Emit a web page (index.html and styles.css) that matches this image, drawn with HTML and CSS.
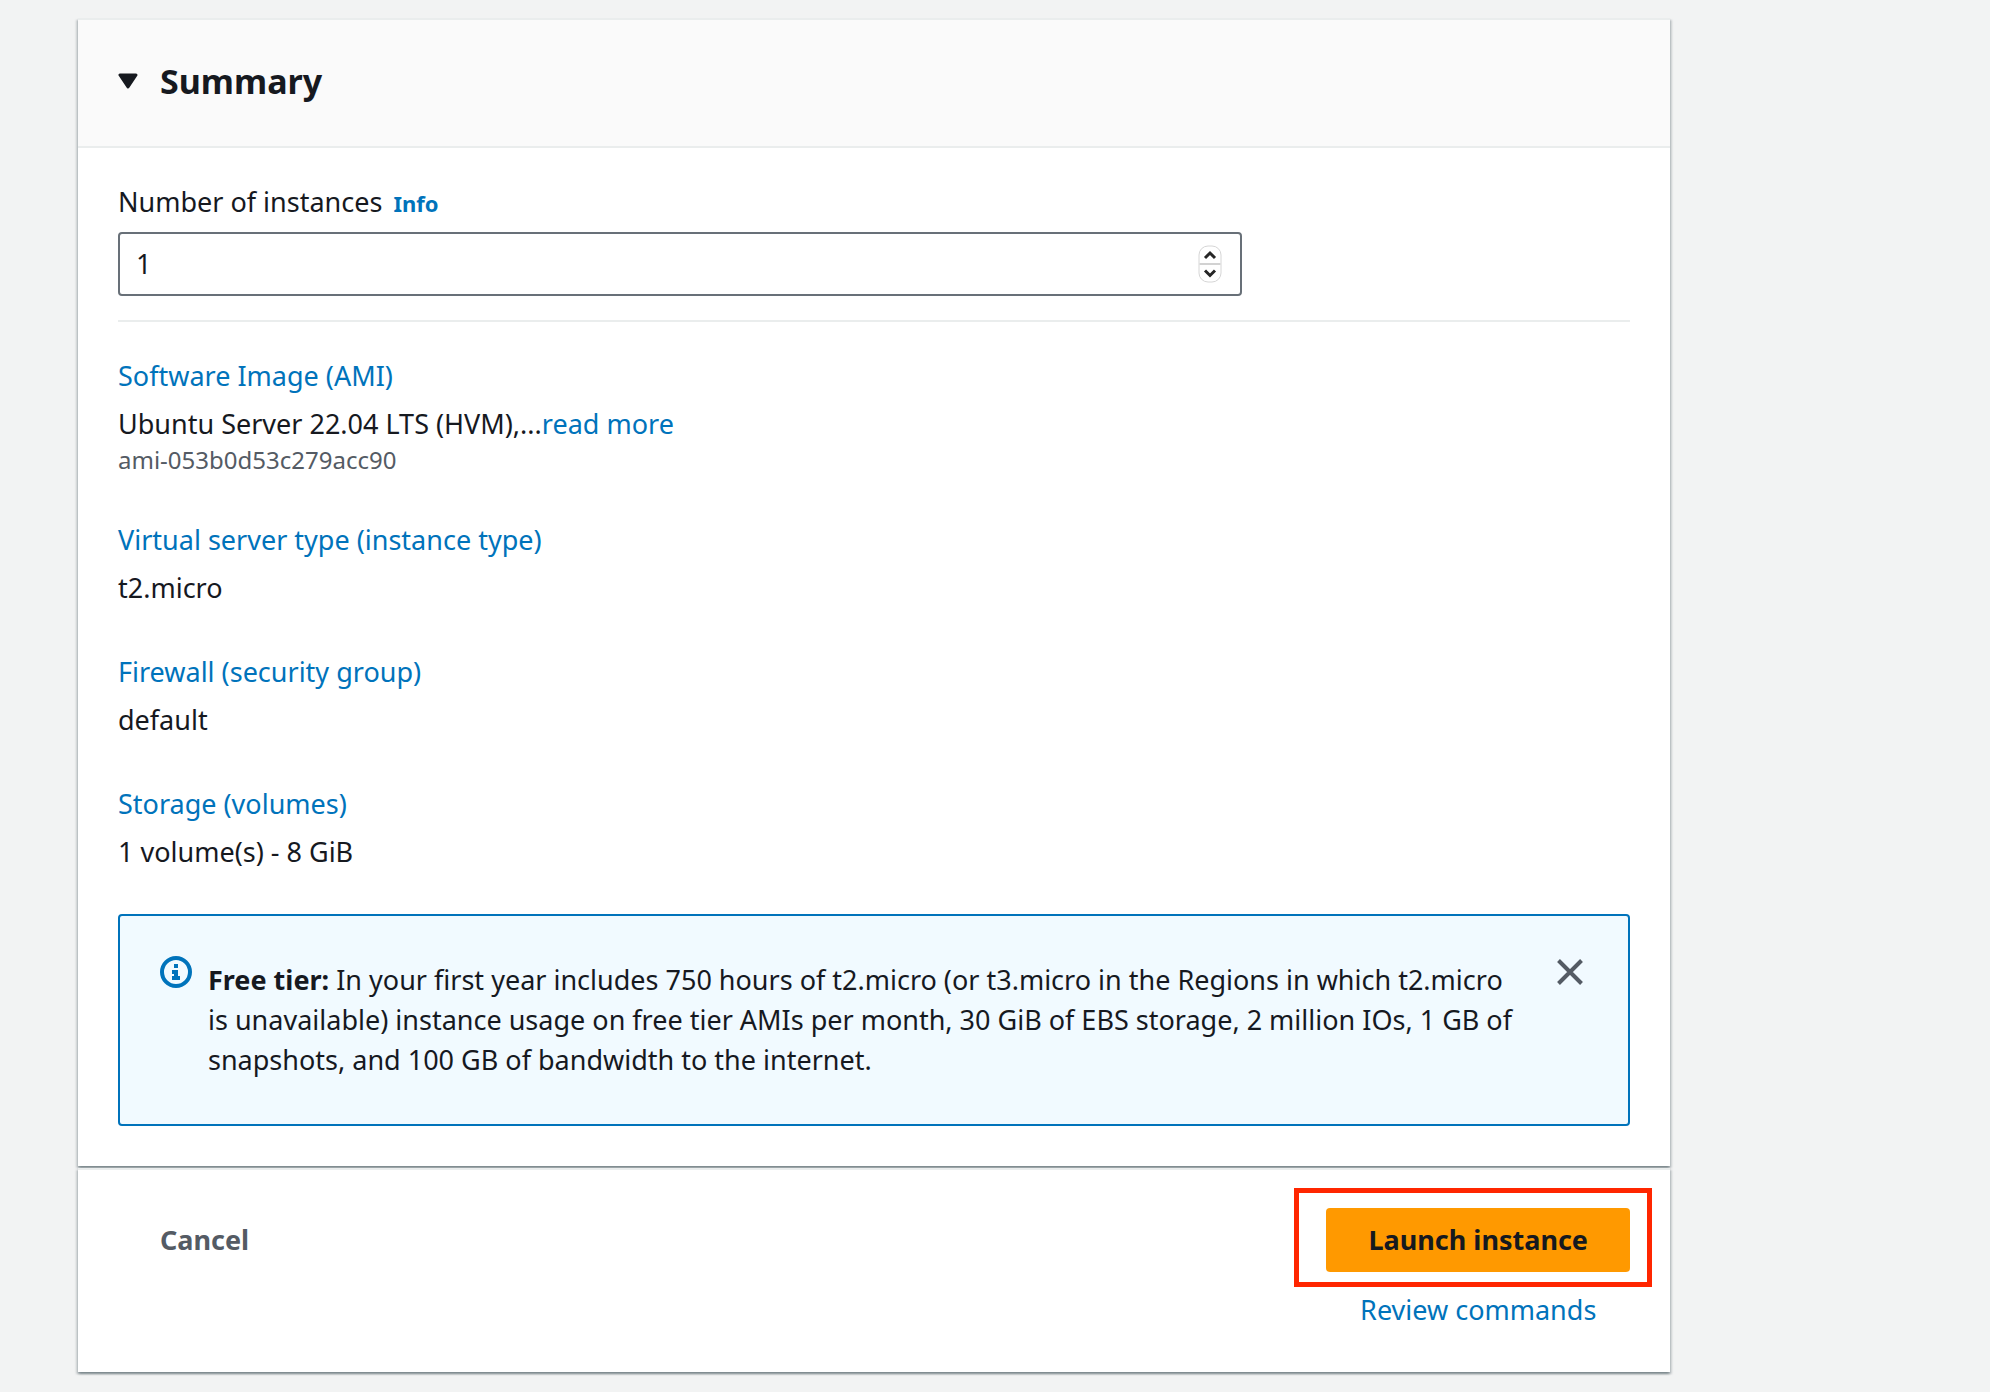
FILE: index.html
```
<!DOCTYPE html>
<html lang="en">
<head>
<meta charset="utf-8">
<meta name="viewport" content="width=device-width, initial-scale=1">
<title>Launch an instance</title>
<link rel="stylesheet" href="styles.css">
</head>
<body>
<main class="panel">
  <section class="card" aria-labelledby="summary-title">
    <header class="card-header">
      <svg class="caret" viewBox="0 0 20 16" aria-hidden="true"><path d="M2 2h16l-8 12z" fill="currentColor" stroke="currentColor" stroke-width="3" stroke-linejoin="round"/></svg>
      <h2 class="card-title" id="summary-title">Summary</h2>
    </header>
    <div class="card-body">
      <div class="field">
        <div class="field-label">
          <label for="count">Number of instances</label>
          <a class="info" href="#info">Info</a>
        </div>
        <div class="grid">
          <div class="number-box">
            <input class="number-input" id="count" type="number" min="1" value="1">
            <svg class="stepper" viewBox="0 0 24 38" aria-hidden="true">
              <rect x="1" y="1" width="22" height="36" rx="9" fill="#fff" stroke="#d6d6d6"/>
              <path d="M1.500 19h21" stroke="#d2d2d2" stroke-width="2"/>
              <path d="M7 13l5-5 5 5M7 25.500l5 5 5-5" fill="none" stroke="#262626" stroke-width="3"/>
            </svg>
          </div>
        </div>
      </div>
      <dl class="details">
        <div class="detail">
          <dt><a href="#ami">Software Image (AMI)</a></dt>
          <dd>Ubuntu Server 22.04 LTS (HVM),...<a href="#more">read more</a></dd>
          <dd class="detail-note">ami-053b0d53c279acc90</dd>
        </div>
        <div class="detail">
          <dt><a href="#type">Virtual server type (instance type)</a></dt>
          <dd>t2.micro</dd>
        </div>
        <div class="detail">
          <dt><a href="#firewall">Firewall (security group)</a></dt>
          <dd>default</dd>
        </div>
        <div class="detail">
          <dt><a href="#storage">Storage (volumes)</a></dt>
          <dd>1 volume(s) - 8 GiB</dd>
        </div>
      </dl>
      <div class="alert" role="status">
        <svg class="alert-icon" viewBox="0 0 32 32" aria-hidden="true">
          <circle cx="16" cy="16" r="14" fill="none" stroke="currentColor" stroke-width="4"/>
          <path d="M14 8h4v4h-4zM12 14h6v6h2v4h-8v-4h2v-2h-2z" fill="currentColor"/>
        </svg>
        <p class="alert-text"><strong>Free tier:</strong> In your first year includes 750 hours of t2.micro (or t3.micro in the Regions in which t2.micro is unavailable) instance usage on free tier AMIs per month, 30 GiB of EBS storage, 2 million IOs, 1 GB of snapshots, and 100 GB of bandwidth to the internet.</p>
        <button class="dismiss" type="button" aria-label="Dismiss">
          <svg viewBox="0 0 28 28" aria-hidden="true"><path d="M2.500 2.500l23 23M25.500 2.500l-23 23" stroke="currentColor" stroke-width="4"/></svg>
        </button>
      </div>
    </div>
  </section>
  <footer class="card actions">
    <button class="cancel" type="button">Cancel</button>
    <div class="primary-actions">
      <button class="launch" type="button">Launch instance</button>
      <a href="#commands">Review commands</a>
    </div>
  </footer>
</main>
</body>
</html>
```
FILE: styles.css
```
*,
*::before {
  box-sizing: border-box;
}

body {
  margin: 0;
  padding: 18px 320px 20px 78px;
  background: #f2f3f3;
  color: #16191f;
  font: 400 27px/40px "Noto Sans", "Open Sans", sans-serif;
}

a {
  color: #0073bb;
  text-decoration: none;
}

button {
  border: 0;
  padding: 0;
  background: none;
  font: inherit;
  cursor: pointer;
}

.panel {
  display: flex;
  flex-direction: column;
  gap: 2px;
}

.card {
  border-top: 2px solid #eaeded;
  background: #fff;
  box-shadow: 0 2px 2px rgba(0, 28, 36, .3), 2px 2px 2px rgba(0, 28, 36, .15), -2px 2px 2px rgba(0, 28, 36, .15);
}

.card-header {
  display: flex;
  align-items: center;
  gap: 22px;
  padding: 41px 40px 45px;
  border-bottom: 2px solid #eaeded;
  background: #fafafa;
}

.caret {
  width: 20px;
  height: 16px;
}

.card-title {
  margin: 0;
  font-size: 34px;
  line-height: 40px;
}

.card-body {
  padding: 34px 40px 40px;
}

.field {
  padding-bottom: 24px;
  border-bottom: 2px solid #eaeded;
}

.field-label {
  display: flex;
  align-items: baseline;
  gap: 11px;
  margin-bottom: 10px;
}

.info {
  font-size: 22px;
  font-weight: 700;
  line-height: 32px;
}

.grid {
  display: grid;
  grid-template-columns: repeat(4, 1fr);
  gap: 40px;
}

.number-box {
  grid-column: span 3;
  display: flex;
  align-items: center;
  height: 64px;
  padding: 0 18px 0 16px;
  border: 2px solid #687078;
  border-radius: 4px;
}

.number-input {
  flex: 1;
  min-width: 0;
  border: 0;
  padding: 0;
  background: none;
  color: inherit;
  font: inherit;
  outline: 0;
  appearance: textfield;
}

.number-input::-webkit-inner-spin-button {
  appearance: none;
  margin: 0;
}

.stepper {
  width: 24px;
  height: 38px;
}

.details {
  display: flex;
  flex-direction: column;
  gap: 44px;
  margin: 0;
  padding: 34px 0 42px;
}

.detail dd {
  margin: 8px 0 0;
}

.detail .detail-note {
  margin: 0;
  color: #545b64;
  font-size: 24px;
  line-height: 32px;
}

.alert {
  display: flex;
  align-items: flex-start;
  padding: 40px;
  border: 2px solid #0073bb;
  border-radius: 4px;
  background: #f1faff;
}

.alert-icon {
  flex: none;
  width: 32px;
  height: 32px;
  margin-right: 16px;
  color: #0073bb;
}

.alert-text {
  flex: 1;
  margin: 0;
  padding: 4px 0;
}

.dismiss {
  width: 32px;
  height: 32px;
  margin-left: 34px;
  color: #545b64;
}

.dismiss svg {
  display: block;
  width: 28px;
  height: 28px;
}

.actions {
  display: flex;
  align-items: flex-start;
  justify-content: space-between;
  padding: 38px 40px 42px;
}

.cancel {
  height: 64px;
  padding: 0 42px;
  color: #545b64;
  font-weight: 700;
}

.primary-actions {
  position: relative;
  display: flex;
  flex-direction: column;
  align-items: center;
  gap: 18px;
}

.launch {
  height: 64px;
  padding: 0 42px;
  border-radius: 4px;
  background: #f90;
  color: #16191f;
  font-weight: 700;
}

/* Highlight frame drawn over the launch button */
.primary-actions::before {
  content: "";
  position: absolute;
  top: -20px;
  left: -32px;
  right: -22px;
  height: 99px;
  border: 5px solid #ff2600;
  pointer-events: none;
}
```
